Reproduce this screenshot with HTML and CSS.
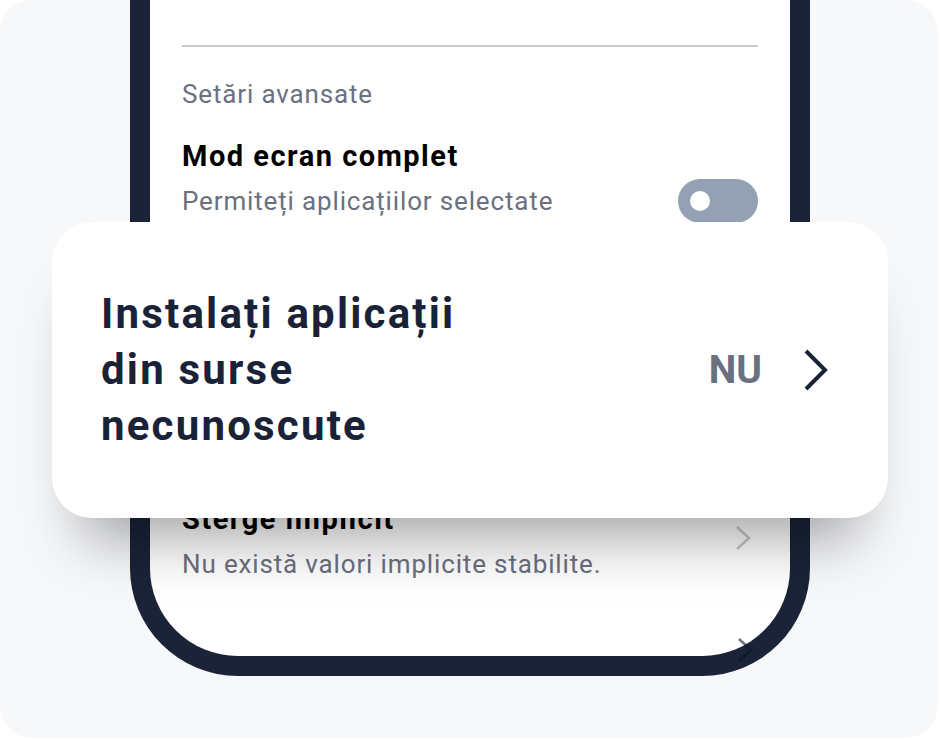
FILE: index.html
```html
<!DOCTYPE html>
<html lang="ro">
<head>
    <meta charset="UTF-8">
    <meta name="viewport" content="width=device-width, initial-scale=1.0">
    <title>Instalați aplicații din surse necunoscute</title>
    <link rel="stylesheet" href="styles.css">
</head>
<body>
    <div class="stage">
        <div class="phone">
            <div class="screen">
                <div class="divider"></div>

                <div class="section-label">Setări avansate</div>

                <div class="setting">
                    <div class="setting-text">
                        <div class="setting-title">Mod ecran complet</div>
                        <div class="setting-sub">Permiteți aplicațiilor selectate</div>
                    </div>
                    <div class="toggle"><span class="knob"></span></div>
                </div>

                <div class="setting setting-clear">
                    <div class="setting-text">
                        <div class="setting-title">Sterge implicit</div>
                        <div class="setting-sub">Nu există valori implicite stabilite.</div>
                    </div>
                    <svg class="chevron-small" width="18" height="28" viewBox="0 0 18 28">
                        <polyline points="3,3 15,14 3,25" fill="none" stroke="#c9c9c9" stroke-width="2.5"/>
                    </svg>
                </div>
            </div>
            <!-- chevron of the next row, peeking over the frame -->
            <svg class="chevron-peek" width="18" height="28" viewBox="0 0 18 28">
                <polyline points="3,3 15,14 3,25" fill="none" stroke="#0f1522" stroke-width="2.5"/>
            </svg>
        </div>

        <div class="card">
            <div class="card-title">Instalați aplicații<br>din surse<br>necunoscute</div>
            <div class="card-value">NU</div>
            <svg class="chevron" width="28" height="44" viewBox="0 0 28 44">
                <polyline points="4,3 23,22 4,41" fill="none" stroke="#1a2238" stroke-width="4"/>
            </svg>
        </div>
    </div>
</body>
</html>
```

FILE: styles.css
```css
body {
    margin: 0;
    background-color: #ffffff;
    font-family: Roboto, "Liberation Sans", sans-serif;
}
.stage {
    position: relative;
    width: 938px;
    height: 738px;
    background-color: #f7f8fa;
    border-radius: 32px;
    overflow: hidden;
}
.phone {
    position: relative;
    box-sizing: border-box;
    width: 680px;
    height: 676px;
    margin-left: 130px;
    border: 20px solid #1a2338;
    border-top: none;
    border-radius: 0 0 108px 108px;
    background-color: #ffffff;
}
.screen {
    padding: 45px 32px 0 32px;
}
.divider {
    border-top: 2px solid #cbcbcb;
}
.section-label {
    margin-top: 31px;
    font-size: 26px;
    line-height: 32px;
    letter-spacing: 0.85px;
    color: #6b7080;
}
.setting {
    display: flex;
    align-items: flex-end;
    justify-content: space-between;
    margin-top: 29px;
}
.setting-title {
    font-size: 29px;
    font-weight: 700;
    line-height: 34px;
    letter-spacing: 1.5px;
    color: #000000;
}
.setting-sub {
    margin-top: 12px;
    font-size: 26px;
    line-height: 32px;
    letter-spacing: 0.85px;
    color: #6b7080;
}
.toggle {
    position: relative;
    width: 80px;
    height: 44px;
    margin-bottom: -6px;
    border-radius: 22px;
    background-color: #94a0b3;
}
.knob {
    position: absolute;
    left: 12px;
    top: 12px;
    width: 20px;
    height: 20px;
    border-radius: 50%;
    background-color: #ffffff;
}
.setting-clear {
    align-items: center;
    margin-top: 285px;
}
.chevron-small {
    margin-right: 6px;
    margin-top: -6px;
}
.chevron-peek {
    position: absolute;
    left: 586px;
    top: 636px;
    opacity: 0.6;
}
.card {
    position: absolute;
    left: 52px;
    top: 222px;
    box-sizing: border-box;
    width: 836px;
    height: 296px;
    display: flex;
    align-items: center;
    padding: 0 58px 0 49px;
    background-color: #ffffff;
    border-radius: 40px;
    box-shadow: 0 50px 60px -30px rgba(0, 0, 0, 0.36);
}
.card-title {
    flex: 1;
    font-size: 42px;
    font-weight: 700;
    line-height: 56px;
    letter-spacing: 2.2px;
    color: #1a2238;
}
.card-value {
    margin-right: 40px;
    font-size: 39px;
    font-weight: 700;
    color: #6b7080;
}
```
